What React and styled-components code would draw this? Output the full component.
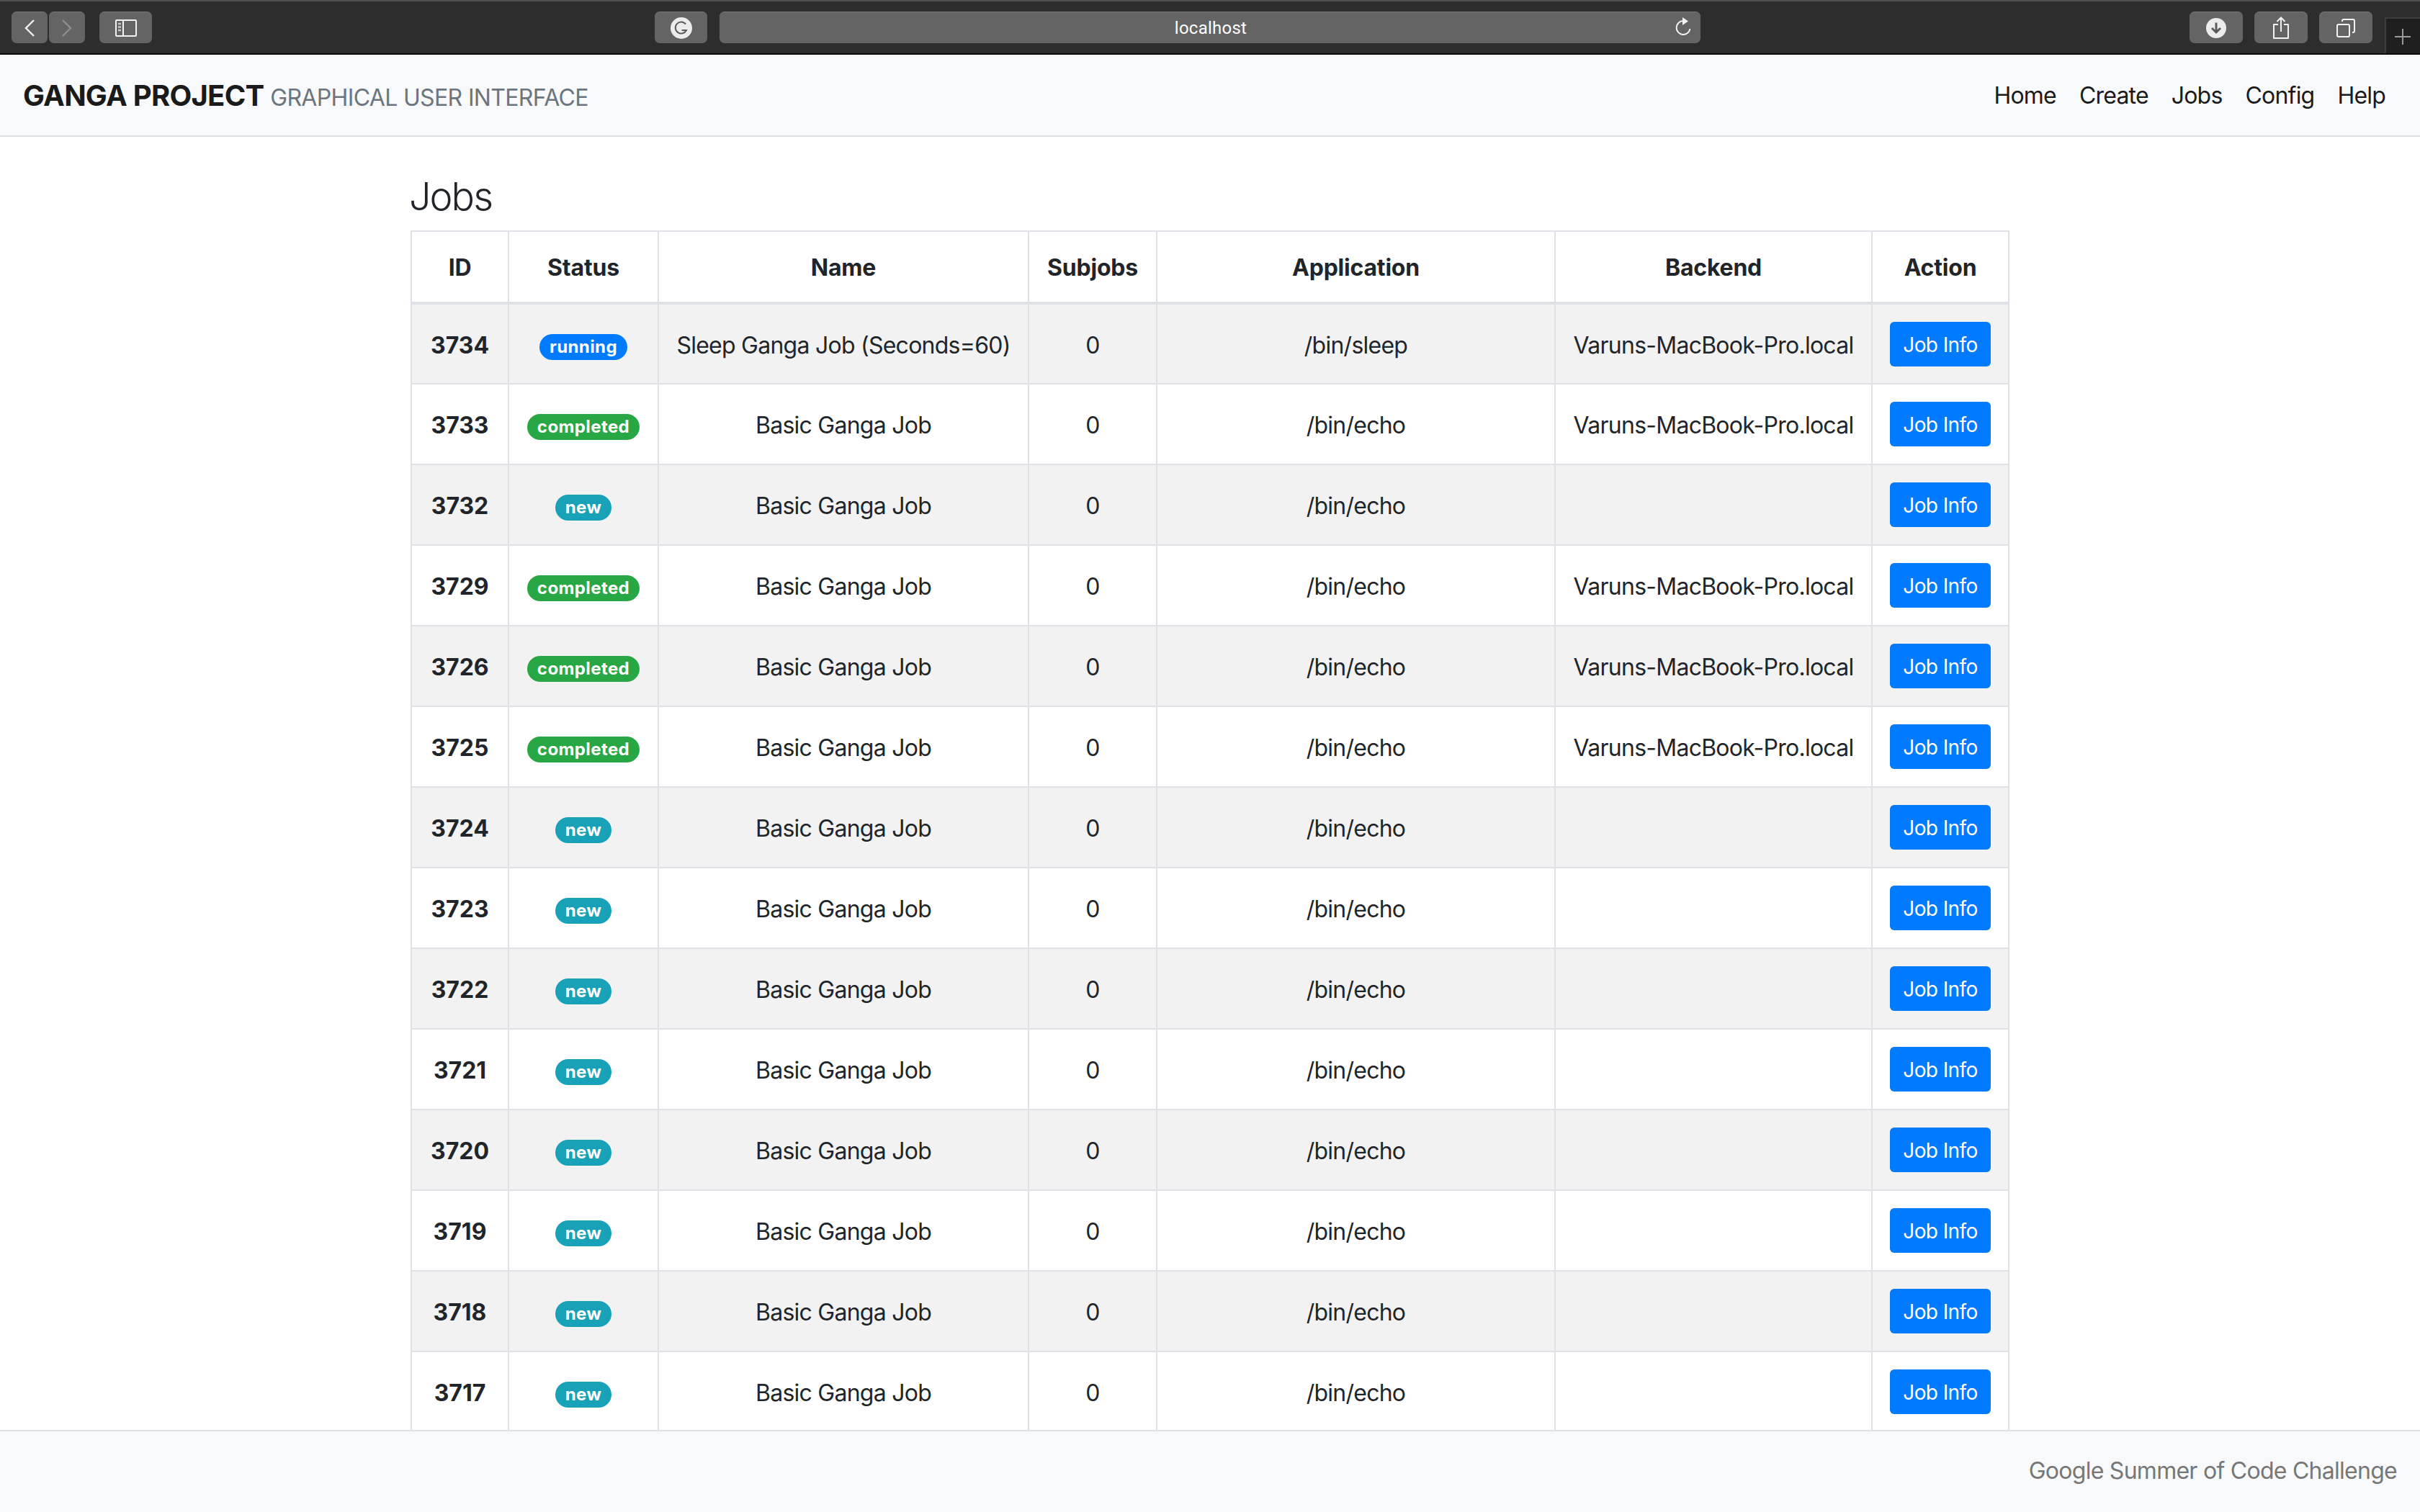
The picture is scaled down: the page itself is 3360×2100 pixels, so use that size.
import React from "react";
import styled, { createGlobalStyle } from "styled-components";

const GlobalStyle = createGlobalStyle`
  html, body { margin: 0; height: 100%; background: #fff; }
  body { font-family: Inter, "Noto Sans", sans-serif; font-size: 32px; line-height: 1.5; color: #212529; }
  #root { height: 100%; }
`;

const Page = styled.div`
  height: 100vh;
  display: flex;
  flex-direction: column;
  overflow: hidden;
`;

const Chrome = styled.div`
  height: 76px;
  box-sizing: border-box;
  flex: none;
  display: flex;
  align-items: flex-start;
  background: #2d2d2d;
  border-top: 2px solid #505050;
  border-bottom: 2px solid #0c0c0c;
  padding: 14px 0 0 16px;
`;

const ChromeButton = styled.div`
  width: ${(p) => p.$w || 74}px;
  height: 44px;
  margin-left: ${(p) => p.$ml || 0}px;
  flex: none;
  display: flex;
  align-items: center;
  justify-content: center;
  background: #646464;
  border-top: 1px solid #757575;
  box-sizing: border-box;
  border-radius: 7px;
`;

const UrlBar = styled(ChromeButton)`
  width: 1362px;
  position: relative;
  padding-left: 2px;
  color: #fff;
  font-size: 24px;
  letter-spacing: 0.25px;
  font-family: Roboto, sans-serif;
`;

const ReloadSlot = styled.span`
  position: absolute;
  right: 12px;
  top: 6px;
  display: flex;
`;

const PlusTab = styled.div`
  width: 49px;
  height: 50px;
  margin-left: 17px;
  margin-top: 8px;
  box-sizing: border-box;
  display: flex;
  justify-content: center;
  padding: 14px 2px 0 0;
  background: #1f1f1f;
  border-left: 2px solid #3d3d3d;
  border-top: 2px solid #3d3d3d;
`;

const NavBar = styled.nav`
  height: 114px;
  flex: none;
  box-sizing: border-box;
  display: flex;
  align-items: center;
  justify-content: space-between;
  padding: 2px 32px 0;
  background: #f8f9fa;
  border-bottom: 2px solid #dee2e6;
`;

const Brand = styled.a`
  font-size: 40px;
  font-weight: 700;
  letter-spacing: -0.75px;
  color: #1a1a1a;
  white-space: nowrap;
`;

const BrandNote = styled.small`
  font-size: 32px;
  font-weight: 400;
  letter-spacing: -0.65px;
  color: #6c757d;
`;

const NavLinks = styled.div`
  display: flex;
`;

const NavLink = styled.a`
  padding: 0 16px;
  color: #1a1a1a;
  letter-spacing: -0.8px;
`;

const Main = styled.main`
  flex: 1;
  min-height: 0;
  overflow: hidden;
  padding-top: 50px;
`;

const Content = styled.div`
  width: 2220px;
  margin: 0 auto;
`;

const Title = styled.h3`
  margin: 0 0 15px -2px;
  font-size: 54px;
  font-weight: 300;
  line-height: 65px;
  letter-spacing: -2px;
`;

const Table = styled.table`
  width: 2218px;
  table-layout: fixed;
  border-collapse: collapse;
  text-align: center;
  letter-spacing: -0.75px;
`;

const Th = styled.th`
  padding: 26px 0 23px;
  font-weight: 700;
  letter-spacing: -0.2px;
  border: 2px solid #dee2e6;
  border-bottom-width: 4px;
`;

const Row = styled.tr`
  background: ${(p) => (p.$odd ? "#f2f2f2" : "#fff")};
`;

const Td = styled.td`
  height: 112px;
  box-sizing: border-box;
  padding: ${(p) => p.$nudge ?? 4}px 0 0;
  border: 2px solid #dee2e6;
  font-weight: ${(p) => (p.$bold ? 700 : 400)};
  letter-spacing: ${(p) => (p.$bold ? "0" : "inherit")};
`;

const STATUS_COLOURS = { running: "#007bff", completed: "#28a745", new: "#17a2b8" };

const Badge = styled.span`
  display: inline-block;
  padding: 6px 14px;
  font-size: 24px;
  font-weight: 700;
  line-height: 1;
  letter-spacing: 0.4px;
  color: #fff;
  border-radius: 18px;
  background: ${(p) => STATUS_COLOURS[p.$status]};
`;

const InfoButton = styled.button`
  width: 140px;
  height: 62px;
  padding: 2px 0 0;
  border: 0;
  border-radius: 6px;
  background: #007bff;
  color: #fff;
  font-family: inherit;
  font-size: 28px;
  letter-spacing: -0.6px;
`;

const Footer = styled.footer`
  height: 114px;
  flex: none;
  box-sizing: border-box;
  display: flex;
  align-items: center;
  justify-content: flex-end;
  padding: 0 32px 2px;
  background: #f8f9fa;
  border-top: 2px solid #dee2e6;
  color: #777;
  letter-spacing: -0.73px;
`;

const COLUMNS = [
  ["ID", 135],
  ["Status", 208],
  ["Name", 514],
  ["Subjobs", 178],
  ["Application", 553],
  ["Backend", 440],
  ["Action", 190],
];

const HOST = "Varuns-MacBook-Pro.local";

const JOBS = [
  [3734, "running", "Sleep Ganga Job (Seconds=60)", "/bin/sleep", HOST],
  [3733, "completed", "Basic Ganga Job", "/bin/echo", HOST],
  [3732, "new", "Basic Ganga Job", "/bin/echo", ""],
  [3729, "completed", "Basic Ganga Job", "/bin/echo", HOST],
  [3726, "completed", "Basic Ganga Job", "/bin/echo", HOST],
  [3725, "completed", "Basic Ganga Job", "/bin/echo", HOST],
  [3724, "new", "Basic Ganga Job", "/bin/echo", ""],
  [3723, "new", "Basic Ganga Job", "/bin/echo", ""],
  [3722, "new", "Basic Ganga Job", "/bin/echo", ""],
  [3721, "new", "Basic Ganga Job", "/bin/echo", ""],
  [3720, "new", "Basic Ganga Job", "/bin/echo", ""],
  [3719, "new", "Basic Ganga Job", "/bin/echo", ""],
  [3718, "new", "Basic Ganga Job", "/bin/echo", ""],
  [3717, "new", "Basic Ganga Job", "/bin/echo", ""],
];

const Chevron = ({ left, dim }) => (
  <svg width="16" height="24" viewBox="0 0 16 24" fill="none" stroke={dim ? "#8e8e8e" : "#f2f2f2"} strokeWidth="2.4">
    <path d={left ? "M14 1 3 12l11 11" : "M2 1l11 11L2 23"} />
  </svg>
);

const SidebarIcon = () => (
  <svg width="30" height="24" viewBox="0 0 30 24" fill="none" stroke="#f2f2f2" strokeWidth="2">
    <rect x="1" y="1" width="28" height="22" rx="1" />
    <path d="M11 1v22" />
    <path d="M4 6h4M4 10.5h4M4 15h4" strokeWidth="2.4" stroke="#c8c8c8" />
  </svg>
);

const GrammarIcon = () => (
  <svg width="30" height="30" viewBox="0 0 30 30" fill="none">
    <circle cx="15" cy="15" r="15" fill="#ececec" />
    <path d="M21 9.5a8 8 0 1 0 1 8.5h-6.5" stroke="#5c5c5c" strokeWidth="2" />
  </svg>
);

const ReloadIcon = () => (
  <svg width="24" height="28" viewBox="0 0 24 28" fill="none" stroke="#f2f2f2" strokeWidth="2">
    <path d="M12 6a9.5 9.5 0 1 0 9.5 11" />
    <path d="M11 1l8 5.5-8 5.5z" fill="#f2f2f2" stroke="none" />
  </svg>
);

const DownloadIcon = () => (
  <svg width="28" height="28" viewBox="0 0 28 28" fill="none">
    <circle cx="14" cy="14" r="14" fill="#ececec" />
    <path d="M14 6.5v13M8 14l6 6 6-6" stroke="#5c5c5c" strokeWidth="3" />
  </svg>
);

const ShareIcon = () => (
  <svg width="24" height="32" viewBox="0 0 24 32" fill="none" stroke="#f2f2f2" strokeWidth="2">
    <path d="M8 11H2v19h20V11h-6" strokeLinejoin="round" />
    <path d="M12 21V2M6.5 7 12 1.5 17.5 7" />
  </svg>
);

const TabsIcon = () => (
  <svg width="26" height="26" viewBox="0 0 26 26" fill="none" stroke="#f2f2f2" strokeWidth="2">
    <rect x="1" y="8" width="17" height="17" rx="2" />
    <path d="M8 4V3a2 2 0 0 1 2-2h13a2 2 0 0 1 2 2v14a2 2 0 0 1-2 2h-1" />
  </svg>
);

const PlusIcon = () => (
  <svg width="22" height="22" viewBox="0 0 22 22" stroke="#9a9a9a" strokeWidth="2">
    <path d="M11 0v22M0 11h22" />
  </svg>
);

const App = () => {
  return (
    <Page>
      <GlobalStyle />
      <Chrome>
        <ChromeButton $w={50}><Chevron left /></ChromeButton>
        <ChromeButton $w={50} $ml={2}><Chevron dim /></ChromeButton>
        <ChromeButton $w={73} $ml={20}><SidebarIcon /></ChromeButton>
        <ChromeButton $w={73} $ml={698}><GrammarIcon /></ChromeButton>
        <UrlBar $ml={17}>
          localhost
          <ReloadSlot><ReloadIcon /></ReloadSlot>
        </UrlBar>
        <ChromeButton $ml={679}><DownloadIcon /></ChromeButton>
        <ChromeButton $ml={16}><ShareIcon /></ChromeButton>
        <ChromeButton $ml={16}><TabsIcon /></ChromeButton>
        <PlusTab><PlusIcon /></PlusTab>
      </Chrome>

      <NavBar>
        <Brand>
          GANGA PROJECT <BrandNote>GRAPHICAL USER INTERFACE</BrandNote>
        </Brand>
        <NavLinks>
          {["Home", "Create", "Jobs", "Config", "Help"].map((item) => (
            <NavLink key={item}>{item}</NavLink>
          ))}
        </NavLinks>
      </NavBar>

      <Main>
        <Content>
          <Title>Jobs</Title>
          <Table>
            <colgroup>
              {COLUMNS.map(([name, width]) => (
                <col key={name} width={width} />
              ))}
            </colgroup>
            <thead>
              <tr>
                {COLUMNS.map(([name]) => (
                  <Th key={name}>{name}</Th>
                ))}
              </tr>
            </thead>
            <tbody>
              {JOBS.map(([id, status, name, app, backend], i) => (
                <Row key={id} $odd={i % 2 === 0}>
                  <Td $bold>{id}</Td>
                  <Td $nudge={2}><Badge $status={status}>{status}</Badge></Td>
                  <Td>{name}</Td>
                  <Td>0</Td>
                  <Td>{app}</Td>
                  <Td>{backend}</Td>
                  <Td $nudge={0}><InfoButton>Job Info</InfoButton></Td>
                </Row>
              ))}
            </tbody>
          </Table>
        </Content>
      </Main>

      <Footer>Google Summer of Code Challenge</Footer>
    </Page>
  );
};

export default App;
